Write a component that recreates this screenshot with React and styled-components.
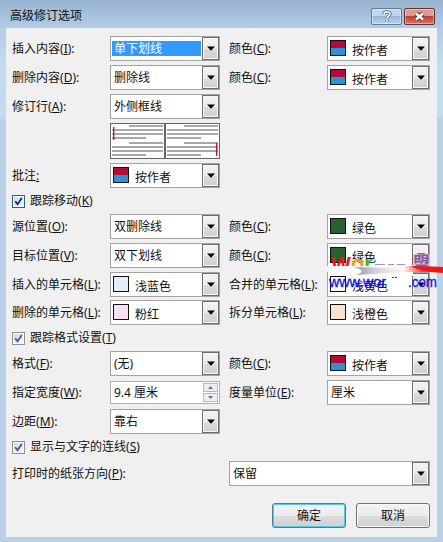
import styled, { createGlobalStyle, css } from 'styled-components'

function Chevron() {
  return (
    <ArrowButton>
      <svg width='8' height='5' viewBox='0 0 8 5'>
        <path d='M0 .5h8L4 4.7z' fill='#000' />
      </svg>
    </ArrowButton>
  )
}

function Select({ value, swatch, selected }) {
  return (
    <SelectBox>
      {swatch && <Swatch $fill={swatch} />}
      <Value $selected={selected} $withSwatch={swatch}>
        {value}
      </Value>
      <Chevron />
    </SelectBox>
  )
}

function Label({ text, hotkey }) {
  return (
    <LabelText>
      {text}
      {hotkey && (
        <>
          (<u>{hotkey}</u>)
        </>
      )}
      {hotkey ? ':' : <u>:</u>}
    </LabelText>
  )
}

function Check({ text, hotkey, height, active }) {
  return (
    <CheckRow $height={height}>
      <CheckBox $active={active}>
        <svg width='9' height='9' viewBox='0 0 9 9'>
          <path
            d='M1.2 4.2 3.6 7.3 7.8 1'
            fill='none'
            stroke={active ? '#17296b' : '#435792'}
            strokeWidth='1.8'
          />
        </svg>
      </CheckBox>
      <span>
        {text}(<u>{hotkey}</u>)
      </span>
    </CheckRow>
  )
}

const lines = [
  [18, 1],
  [1, 5],
  [1, 9],
  [1, 13, 34],
  [18, 18],
  [1, 22],
  [1, 26],
  [1, 30, 34],
]

function Page({ bar }) {
  return (
    <svg width='53' height='34' viewBox='0 0 53 34'>
      <rect width='53' height='34' fill='#fff' />
      {lines.map(([x, y, width]) => (
        <rect key={y} x={x} y={y} width={width || 52 - x} height='2' fill='#a8a8a8' />
      ))}
      <rect x={bar.x} y={bar.y} width='1.4' height='13' fill='#d0102c' />
    </svg>
  )
}

function Watermark() {
  return (
    <Mark width='123' height='50' viewBox='0 0 123 50'>
      <defs>
        <linearGradient id='streak'>
          <stop offset='0' stopColor='#f1eeee' />
          <stop offset='.25' stopColor='#fff' />
          <stop offset='.68' stopColor='#fff7f7' />
          <stop offset='.82' stopColor='#e95050' />
          <stop offset='1' stopColor='#f00000' />
        </linearGradient>
        <linearGradient id='shade'>
          <stop offset='0' stopColor='#777085' stopOpacity='.75' />
          <stop offset='1' stopColor='#fff' stopOpacity='0' />
        </linearGradient>
        <clipPath id='top'>
          <rect width='123' height='22' />
        </clipPath>
      </defs>
      <rect x='8' y='20' width='85' height='11' fill='#fff' />
      <rect x='68' y='30' width='22' height='13' fill='#fff' />
      <g clipPath='url(#top)'>
        <g fontFamily='"Liberation Sans", sans-serif' fontWeight='700'>
          <text x='11' y='26' fontSize='21' fill='#f01414'>W</text>
          <text x='31' y='26' fontSize='22' fill='#f59a22'>o</text>
          <text x='44' y='26' fontSize='22' fill='#36bc35'>r</text>
        </g>
        <rect x='93' y='9' width='17' height='14' fill='#d7c2df' opacity='.8' />
        <text
          x='93'
          y='24'
          fontSize='17'
          fontWeight='700'
          fill='#8a5a98'
          fontFamily='"Noto Sans CJK SC", sans-serif'
        >
          盟
        </text>
      </g>
      <path d='M55 19.5h10m3 0h6m3 0h8' stroke='#9793d0' />
      <path d='M0 21h90l33 1v5H92L40 28 0 26z' fill='url(#streak)' />
      <path d='M34 22Q48 26 36 30L55 29Q70 27 98 28L91 25Q65 22 34 22z' fill='url(#shade)' />
      <path d='M90 21Q102 27 123 28V22z' fill='#ee1717' />
      <g
        fontFamily='"Liberation Sans", sans-serif'
        fontSize='14'
        fill='#1212e8'
        stroke='#1212e8'
        strokeWidth='.3'
      >
        <text x='9' y='42' textLength='57' lengthAdjust='spacingAndGlyphs'>
          www.wor
        </text>
        <text x='88' y='42' textLength='29' lengthAdjust='spacingAndGlyphs'>
          .com
        </text>
      </g>
      <path d='M72 32h2v1h-2zm3 0h2v1h-2z' fill='#2730df' />
    </Mark>
  )
}

const authorColor = 'linear-gradient(#b30b35 0 50%, #2e91d1 50%)'

function App() {
  return (
    <Dialog>
      <GlobalStyle />
      <TitleBar>
        <Title>高级修订选项</Title>
        <WindowButton>
          <svg width='12' height='13' viewBox='0 0 12 13'>
            <path d='M3 4.2C3 1 9 1 9 4c0 2-3 2-3 4.3M6 10v1.7' fill='none' stroke='#465b7b' strokeWidth='3.2' />
            <path d='M3 4.2C3 1 9 1 9 4c0 2-3 2-3 4.3M6 10v1.7' fill='none' stroke='#fff' strokeWidth='1.6' />
          </svg>
        </WindowButton>
        <WindowButton $close>
          <svg width='13' height='11' viewBox='0 0 13 11'>
            <path d='m3 2.5 7 6m0-6-7 6' fill='none' stroke='#54374a' strokeWidth='4.4' />
            <path d='m3 2.5 7 6m0-6-7 6' fill='none' stroke='#fff' strokeWidth='2.5' />
          </svg>
        </WindowButton>
      </TitleBar>
      <Body>
        <Row $height={29}>
          <Label text='插入内容' hotkey='I' />
          <Select value='单下划线' selected />
          <Label text='颜色' hotkey='C' />
          <Select value='按作者' swatch={authorColor} />
        </Row>
        <Row $height={29}>
          <Label text='删除内容' hotkey='D' />
          <Select value='删除线' />
          <Label text='颜色' hotkey='C' />
          <Select value='按作者' swatch={authorColor} />
        </Row>
        <Row $height={29}>
          <Label text='修订行' hotkey='A' />
          <Select value='外侧框线' />
        </Row>
        <Row $height={40}>
          <Preview>
            <Page bar={{ x: 2, y: 3 }} />
            <Page bar={{ x: 50, y: 19 }} />
          </Preview>
        </Row>
        <Row $height={25}>
          <Label text='批注' />
          <Select value='按作者' swatch={authorColor} />
        </Row>
        <Check text='跟踪移动' hotkey='K' height={26} active />
        <Row $height={29}>
          <Label text='源位置' hotkey='O' />
          <Select value='双删除线' />
          <Label text='颜色' hotkey='C' />
          <Select value='绿色' swatch='#29602f' />
        </Row>
        <Row $height={29}>
          <Label text='目标位置' hotkey='V' />
          <Select value='双下划线' />
          <Label text='颜色' hotkey='C' />
          <Select value='绿色' swatch='#29602f' />
        </Row>
        <Row $height={28}>
          <Label text='插入的单元格' hotkey='L' />
          <Select value='浅蓝色' swatch='#e0effb' />
          <Label text='合并的单元格' hotkey='L' />
          <Select value='浅黄色' swatch='#fff6dd' />
        </Row>
        <Row $height={25}>
          <Label text='删除的单元格' hotkey='L' />
          <Select value='粉红' swatch='#f9e1f5' />
          <Label text='拆分单元格' hotkey='L' />
          <Select value='浅橙色' swatch='#fbe2d0' />
        </Row>
        <Check text='跟踪格式设置' hotkey='T' height={26} />
        <Row $height={29}>
          <Label text='格式' hotkey='F' />
          <Select value='(无)' />
          <Label text='颜色' hotkey='C' />
          <Select value='按作者' swatch={authorColor} />
        </Row>
        <Row $height={29}>
          <Label text='指定宽度' hotkey='W' />
          <NumberBox>
            <Value>9.4 厘米</Value>
            <Spinner>
              <SpinButton>
                <svg width='5' height='3' viewBox='0 0 5 3'>
                  <path d='M0 3h5L2.5 0z' fill='#65738e' />
                </svg>
              </SpinButton>
              <SpinButton>
                <svg width='5' height='3' viewBox='0 0 5 3'>
                  <path d='M0 0h5L2.5 3z' fill='#65738e' />
                </svg>
              </SpinButton>
            </Spinner>
          </NumberBox>
          <Label text='度量单位' hotkey='E' />
          <Select value='厘米' />
        </Row>
        <Row $height={25}>
          <Label text='边距' hotkey='M' />
          <Select value='靠右' />
        </Row>
        <Check text='显示与文字的连线' hotkey='S' height={27} />
        <PaperRow>
          <Label text='打印时的纸张方向' hotkey='P' />
          <Select value='保留' />
        </PaperRow>
        <Actions>
          <Button $primary>确定</Button>
          <Button>取消</Button>
        </Actions>
      </Body>
      <Watermark />
    </Dialog>
  )
}

const GlobalStyle = createGlobalStyle`
  * {
    box-sizing: border-box;
  }

  body {
    margin: 0;
    overflow: hidden;
  }

  svg {
    display: block;
  }

  u {
    text-underline-offset: 1px;
    text-decoration-thickness: 1px;
  }
`

const Dialog = styled.main`
  position: relative;
  width: 443px;
  height: 542px;
  padding: 0 6px 5px;
  background: linear-gradient(#99b4d1, #b3cbe5 28px, #c3dcf1 65px, #c3dcf1 115px, #b9d0e8 120px);
  font-family: 'Noto Sans', 'Noto Sans CJK SC', sans-serif;
  font-size: 12px;
  line-height: 16px;
  color: #111;
`

const TitleBar = styled.header`
  height: 28px;
  padding: 8px 2px 0 4px;
  display: flex;
`

const Title = styled.h1`
  flex: 1;
  margin: 0;
  font-size: 12px;
  font-weight: 400;
`

const WindowButton = styled.button`
  width: 31px;
  height: 17px;
  margin-left: 2px;
  padding: 0;
  display: grid;
  place-items: center;
  border: 1px solid #627b9a;
  border-radius: 2px;
  box-shadow: inset 0 0 0 1px rgba(255, 255, 255, 0.4);
  background: linear-gradient(#c4d6e9 45%, #9ab7d5 50%, #b9d4ec);

  ${(props) =>
    props.$close &&
    css`
      border-color: #632e36;
      background: linear-gradient(#dc998e 45%, #bd4335 50%, #d6775c);
    `}
`

const Body = styled.section`
  height: 509px;
  padding: 8px 7px 0 6px;
  background: #f0f0f0;
`

const Row = styled.div`
  height: ${(props) => props.$height}px;
  display: grid;
  grid-template-columns: 98px 110px 107px 103px;
  align-items: start;

  > :nth-child(3) {
    padding-left: 9px;
  }
`

const PaperRow = styled(Row)`
  height: 42px;
  grid-template-columns: 217px 201px;
`

const LabelText = styled.label`
  height: 25px;
  line-height: 25px;
  white-space: nowrap;
`

const SelectBox = styled.div`
  height: 25px;
  display: flex;
  border: 1px solid #a3a3a3;
  background: #fff;
`

const Swatch = styled.span`
  width: 16px;
  height: 16px;
  margin: 3px 0 0 2px;
  border: 1px solid #111;
  background: ${(props) => props.$fill};
`

const Value = styled.span`
  flex: 1;
  height: 15px;
  margin: 4px 1px 0 1px;
  padding-left: 2px;
  line-height: 15px;
  white-space: nowrap;

  ${(props) =>
    props.$withSwatch &&
    css`
      margin: 6px 0 0 4px;
    `}

  ${(props) =>
    props.$selected &&
    css`
      color: #fff;
      background: #3399ff;
    `}
`

const ArrowButton = styled.button`
  width: 17px;
  height: 23px;
  padding: 0;
  display: grid;
  place-items: center;
  border: 1px solid #6d6d6d;
  background: linear-gradient(#f3f3f3, #ebebeb 50%, #dcdcdc 52%, #cfcfcf);
  box-shadow: inset 0 0 0 1px #f7f7f7;
`

const Preview = styled.div`
  grid-column: 2;
  width: 110px;
  height: 36px;
  display: flex;
  gap: 2px;
  border: 1px solid #656565;
  background: #656565;
  overflow: hidden;
`

const NumberBox = styled(SelectBox)`
  height: 23px;
  margin-top: 1px;
  border-color: #b0b0b0;

  ${Value} {
    margin-top: 3px;
  }
`

const Spinner = styled.div`
  width: 16px;
  padding: 1px 1px 1px 0;
  display: grid;
  gap: 1px;
`

const SpinButton = styled.button`
  padding: 0;
  display: grid;
  place-items: center;
  border: 1px solid #b9b9b9;
  background: #eeeeee;
`

const CheckRow = styled.div`
  height: ${(props) => props.$height}px;
  padding-top: 5px;
  display: flex;
  gap: 5px;
  line-height: 16px;
`

const CheckBox = styled.span`
  width: 13px;
  height: 13px;
  margin-top: 2px;
  display: grid;
  place-items: center;
  border: 1px solid ${(props) => (props.$active ? '#2d6286' : '#8c8f94')};
  background: ${(props) =>
    props.$active
      ? 'linear-gradient(135deg, #b5e0f5, #eefaff)'
      : 'linear-gradient(135deg, #cfd4df, #fafafa)'};
  box-shadow: inset 0 0 0 1px #f7fafc;
`

const Actions = styled.div`
  display: flex;
  justify-content: flex-end;
  gap: 10px;
`

const Button = styled.button`
  width: 74px;
  height: 25px;
  padding: 0;
  font: inherit;
  color: #111;
  border: 1px solid #707070;
  border-radius: 3px;
  background: linear-gradient(#f3f3f3, #ebebeb 50%, #dddddd 52%, #cfcfcf);
  box-shadow: inset 0 0 0 1px #fafafa;

  ${(props) =>
    props.$primary &&
    css`
      border-color: #3c7fb1;
      box-shadow: inset 0 0 0 1px #55c9e8;
    `}
`

const Mark = styled.svg`
  position: absolute;
  left: 320px;
  top: 245px;
`

export default App
